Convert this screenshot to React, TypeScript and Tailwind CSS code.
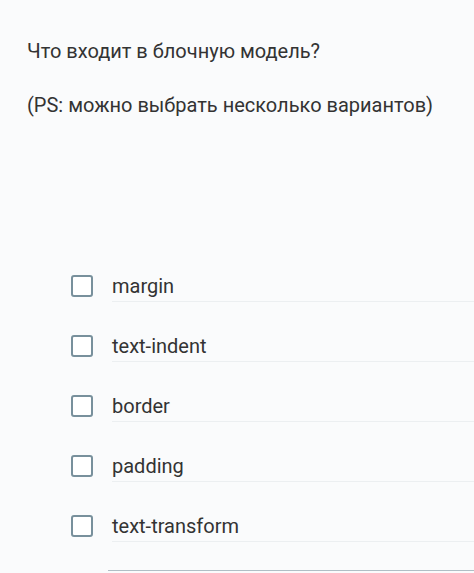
const options = ["margin", "text-indent", "border", "padding", "text-transform"];

export default function App() {
  return (
    <div className="min-h-[573px] w-full overflow-hidden bg-[#fafbfc] text-[#333] font-['Roboto',sans-serif]">
      <div className="pl-[27px] pt-[38px]">
        <p className="text-[20px] leading-[26px]">Что входит в блочную модель?</p>
        <p className="mt-[28px] text-[20px] leading-[26px]">(PS: можно выбрать несколько вариантов)</p>
      </div>

      <ul className="mt-[155px] flex flex-col gap-[31px] pl-[71px]">
        {options.map((o) => (
          <li key={o} className="flex items-center gap-[19px]">
            <span className="mb-[3px] h-[22px] w-[22px] shrink-0 rounded-[3px] border-2 border-[#78909c] bg-white" />
            <span className="flex-1 border-b border-[#eceff1] pb-[2px] text-[20px] leading-[26px]">{o}</span>
          </li>
        ))}
      </ul>

      <div className="ml-[108px] mt-[28px] h-[2px] border-t border-[#b0bec5]" />
    </div>
  );
}
